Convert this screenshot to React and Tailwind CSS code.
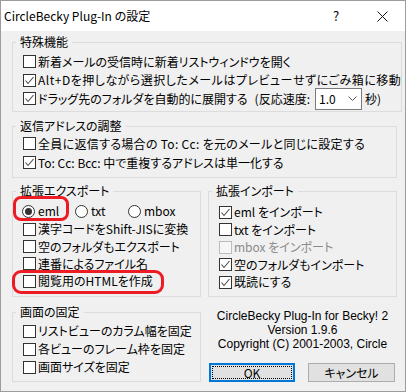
import React from 'react';

const Check = ({ checked, disabled }) => (
  <span
    className={
      disabled
        ? 'w-[13px] h-[13px] shrink-0 border border-[#bcbcbc] bg-[#f6f6f6]'
        : 'w-[13px] h-[13px] shrink-0 border border-[#333333] bg-white flex items-center justify-center'
    }
  >
    {checked && (
      <svg width="11" height="11" viewBox="0 0 11 11">
        <path d="M1.5 5.5 L4 8.5 L9.5 2" stroke="#4a4a4a" strokeWidth="1.1" fill="none" />
      </svg>
    )}
  </span>
);

const Row = ({ checked, disabled, h = 'h-[19px]', extra = '', children }) => (
  <div className={`flex items-center gap-[2px] ${h}`}>
    <Check checked={checked} disabled={disabled} />
    <span className={disabled ? 'text-[#8b8b8b] whitespace-nowrap' : `whitespace-nowrap ${extra}`}>{children}</span>
  </div>
);

const Radio = ({ selected, children }) => (
  <div className="w-[53px] flex items-center gap-[3px]">
    <span className="w-[13px] h-[13px] rounded-full border border-[#333333] bg-white flex items-center justify-center">
      {selected && <span className="w-[7px] h-[7px] rounded-full bg-[#333333]" />}
    </span>
    <span>{children}</span>
  </div>
);

const Group = ({ title, className = '', children }) => (
  <fieldset className={`border border-[#dcdcdc] pl-[3px] ${className}`}>
    <legend className="px-[4px] leading-[14px]">{title}</legend>
    <div className="pl-[7px]">{children}</div>
  </fieldset>
);

export default function App() {
  return (
    <div className="w-[406px] h-[392px] bg-white">
      <div className="relative w-[406px] h-[392px] border border-[#9c9c9c] bg-[#f0f0f0] flex flex-col text-[12px] leading-[14px] text-black font-['Noto_Sans_CJK_JP','Noto_Sans',sans-serif] [font-feature-settings:'palt']">
        {/* title bar */}
        <div className="h-[30px] shrink-0 bg-white flex items-center">
          <span className="pl-[3px] flex-1">CircleBecky Plug-In の設定</span>
          <div className="w-[46px] h-[30px] flex items-center justify-center text-[13px]">?</div>
          <div className="w-[46px] h-[30px] flex items-center justify-center">
            <svg width="11" height="11" viewBox="0 0 11 11">
              <path d="M0.5 0.5 L10.5 10.5 M10.5 0.5 L0.5 10.5" stroke="#111" strokeWidth="1" />
            </svg>
          </div>
        </div>

        <div className="flex-1 pl-[11px] pr-[8px] pt-[4px] flex flex-col">
          <Group title="特殊機能" className="pb-[3px]">
            <div className="pt-[3px]">
              <Row>新着メールの受信時に新着リストウィンドウを開く</Row>
              <Row checked h="h-[18px]" extra="tracking-[0.5px]">Alt+Dを押しながら選択したメールはプレビューせずにごみ箱に移動</Row>
              <div className="flex items-center gap-[2px] h-[19px]">
                <Check checked />
                <span className="whitespace-nowrap">ドラッグ先のフォルダを自動的に展開する</span>
                <span className="ml-[5px] whitespace-nowrap">(反応速度:</span>
                <div className="ml-[3px] w-[47px] h-[22px] shrink-0 bg-white border border-[#7a7a7a] flex items-center justify-between pl-[3px] pr-[4px]">
                  <span>1.0</span>
                  <svg width="9" height="6" viewBox="0 0 9 6">
                    <path d="M0.5 0.5 L4.5 4.5 L8.5 0.5" stroke="#555" strokeWidth="1" fill="none" />
                  </svg>
                </div>
                <span className="ml-[1px]">秒)</span>
              </div>
            </div>
          </Group>

          <Group title="返信アドレスの調整" className="mt-[7px] pb-[5px]">
            <div className="pt-[1px]">
              <Row extra="tracking-[0.3px]">全員に返信する場合の To: Cc: を元のメールと同じに設定する</Row>
              <Row checked>To: Cc: Bcc: 中で重複するアドレスは単一化する</Row>
            </div>
          </Group>

          <div className="mt-[6px] grid grid-cols-[189px_189px] gap-x-[7px]">
            <div className="flex flex-col">
              <Group title="拡張エクスポート" className="pb-[6px]">
                <div className="pt-[4px]">
                  <div className="flex items-center h-[18px] -ml-[1px]">
                    <div className="relative">
                      <Radio selected>eml</Radio>
                      <span className="absolute left-[-9px] top-[-8px] w-[56px] h-[25px] border-[3px] border-[#ed1c24] rounded-[8px]" />
                    </div>
                    <Radio>txt</Radio>
                    <Radio>mbox</Radio>
                  </div>
                  <Row h="h-[18px]">漢字コードをShift-JISに変換</Row>
                  <Row h="h-[17px]">空のフォルダもエクスポート</Row>
                  <Row h="h-[17px]">連番によるファイル名</Row>
                  <div className="relative">
                    <Row h="h-[18px]">閲覧用のHTMLを作成</Row>
                    <span className="absolute left-[-11px] top-[-2px] w-[152px] h-[24px] border-[3px] border-[#ed1c24] rounded-[9px]" />
                  </div>
                </div>
              </Group>

              <Group title="画面の固定" className="mt-[8px] pb-[5px]">
                <div className="pt-[3px]">
                  <Row h="h-[18px]">リストビューのカラム幅を固定</Row>
                  <Row h="h-[18px]">各ビューのフレーム枠を固定</Row>
                  <Row h="h-[18px]">画面サイズを固定</Row>
                </div>
              </Group>
            </div>

            <div className="flex flex-col">
              <Group title="拡張インポート" className="pb-[5px]">
                <div className="pt-[5px]">
                  <Row checked h="h-[18px]">eml をインポート</Row>
                  <Row h="h-[17px]">txt をインポート</Row>
                  <Row disabled h="h-[18px]">mbox をインポート</Row>
                  <Row checked h="h-[17px]">空のフォルダもインポート</Row>
                  <Row checked h="h-[18px]">既読にする</Row>
                </div>
              </Group>

              <div className="mt-[12px] flex flex-col items-center leading-[14px] font-['Liberation_Sans',sans-serif]">
                <span>CircleBecky Plug-In for Becky! 2</span>
                <span>Version 1.9.6</span>
                <span>Copyright (C) 2001-2003, Circle</span>
              </div>

              <div className="mt-[12px] flex gap-[13px] pl-[1px]">
                <button className="w-[86px] h-[19px] border-2 border-[#0078d7] bg-[#e1e1e1] p-[1px]">
                  <span className="w-full h-full border border-dotted border-black flex items-center justify-center">OK</span>
                </button>
                <button className="w-[87px] h-[19px] border border-[#adadad] bg-[#e1e1e1] flex items-center justify-center">
                  キャンセル
                </button>
              </div>
            </div>
          </div>
        </div>
      </div>
    </div>
  );
}
